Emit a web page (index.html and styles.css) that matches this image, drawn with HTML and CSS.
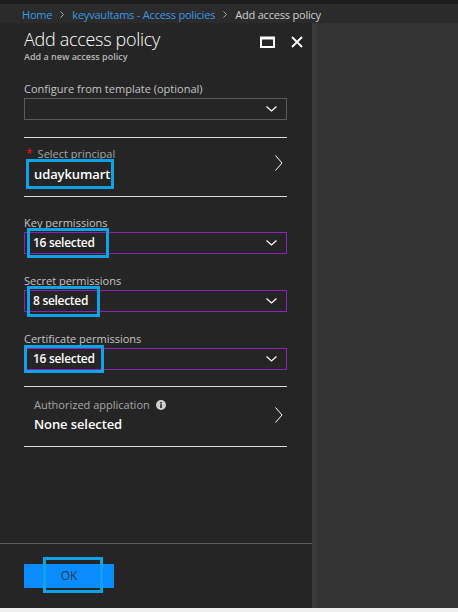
FILE: index.html
```html
<!DOCTYPE html>
<html lang="en">
<head>
<meta charset="utf-8">
<title>Add access policy</title>
<link rel="stylesheet" href="styles.css">
</head>
<body>
<div class="topstrip"></div>
<nav class="breadcrumb">
  <a class="crumb-link">Home</a>
  <svg class="crumb-sep" width="4" height="7" viewBox="0 0 4 7"><polyline points="0.5,0.5 3.5,3.5 0.5,6.5" fill="none" stroke="#a8a8a8" stroke-width="1"/></svg>
  <a class="crumb-link">keyvaultams - Access policies</a>
  <svg class="crumb-sep" width="4" height="7" viewBox="0 0 4 7"><polyline points="0.5,0.5 3.5,3.5 0.5,6.5" fill="none" stroke="#a8a8a8" stroke-width="1"/></svg>
  <span class="crumb-current">Add access policy</span>
</nav>
<div class="main">
  <section class="panel">
    <header class="panel-header">
      <div class="titles">
        <h1 class="title">Add access policy</h1>
        <p class="subtitle">Add a new access policy</p>
      </div>
      <div class="window-btns">
        <svg class="icon-max" width="15" height="12" viewBox="0 0 15 12"><rect x="1" y="1.5" width="13" height="9.5" fill="none" stroke="#fff" stroke-width="2"/><rect x="1" y="1" width="13" height="2.5" fill="#fff"/></svg>
        <svg class="icon-close" width="12" height="12" viewBox="0 0 12 12"><path d="M1 1L11 11M11 1L1 11" stroke="#fff" stroke-width="1.8" fill="none"/></svg>
      </div>
    </header>
    <div class="panel-body">
      <div class="field">
        <div class="label">Configure from template (optional)</div>
        <div class="select select-gray">
          <span class="select-value"></span>
          <svg class="chev-down" width="11" height="6" viewBox="0 0 11 6"><polyline points="0.5,0.5 5.5,5 10.5,0.5" fill="none" stroke="#fff" stroke-width="1.2"/></svg>
        </div>
      </div>
      <div class="rule rule-first"></div>
      <div class="nav-field nav-principal">
        <div class="nav-text">
          <div class="label label-dim"><span class="req">*</span>Select principal</div>
          <div class="nav-value">udaykumart<span class="mark mark-principal"></span></div>
        </div>
        <svg class="chev-right" width="8" height="16" viewBox="0 0 8 16"><polyline points="0.5,0.5 7,8 0.5,15.5" fill="none" stroke="#fff" stroke-width="1"/></svg>
      </div>
      <div class="rule"></div>
      <div class="field field-perm">
        <div class="label">Key permissions</div>
        <div class="select select-purple">
          <span class="select-value">16 selected</span>
          <svg class="chev-down" width="11" height="6" viewBox="0 0 11 6"><polyline points="0.5,0.5 5.5,5 10.5,0.5" fill="none" stroke="#fff" stroke-width="1.2"/></svg>
          <span class="mark mark-key"></span>
        </div>
      </div>
      <div class="field field-perm">
        <div class="label">Secret permissions</div>
        <div class="select select-purple">
          <span class="select-value">8 selected</span>
          <svg class="chev-down" width="11" height="6" viewBox="0 0 11 6"><polyline points="0.5,0.5 5.5,5 10.5,0.5" fill="none" stroke="#fff" stroke-width="1.2"/></svg>
          <span class="mark mark-secret"></span>
        </div>
      </div>
      <div class="field field-perm">
        <div class="label">Certificate permissions</div>
        <div class="select select-purple">
          <span class="select-value">16 selected</span>
          <svg class="chev-down" width="11" height="6" viewBox="0 0 11 6"><polyline points="0.5,0.5 5.5,5 10.5,0.5" fill="none" stroke="#fff" stroke-width="1.2"/></svg>
          <span class="mark mark-cert"></span>
        </div>
      </div>
      <div class="rule"></div>
      <div class="nav-field nav-app">
        <div class="nav-text">
          <div class="label label-dim">Authorized application
            <svg class="info" width="10" height="10" viewBox="0 0 10 10"><circle cx="5" cy="5" r="5" fill="#cfcfcf"/><rect x="4.2" y="4.2" width="1.6" height="3.8" fill="#252525"/><rect x="4.2" y="2" width="1.6" height="1.5" fill="#252525"/></svg>
          </div>
          <div class="nav-value">None selected</div>
        </div>
        <svg class="chev-right" width="8" height="16" viewBox="0 0 8 16"><polyline points="0.5,0.5 7,8 0.5,15.5" fill="none" stroke="#fff" stroke-width="1"/></svg>
      </div>
      <div class="rule"></div>
    </div>
    <footer class="panel-footer">
      <button class="ok-btn">OK<span class="mark mark-ok"></span></button>
    </footer>
  </section>
  <div class="scrollbar"></div>
  <div class="backdrop"></div>
</div>
<div class="bottomstrip"></div>
</body>
</html>
```
FILE: styles.css
```css
* { box-sizing: border-box; }
html, body { margin: 0; padding: 0; }
body {
  width: 458px;
  height: 612px;
  overflow: hidden;
  background: #333333;
  font-family: "Open Sans", "Noto Sans", sans-serif;
  color: #fff;
}
.topstrip { height: 4px; background: #1d1d1d; }
.breadcrumb {
  height: 19px;
  background: #2b2b2b;
  display: flex;
  align-items: center;
  padding: 1px 0 0 22px;
  font-size: 11px;
  letter-spacing: -0.2px;
  white-space: nowrap;
  overflow: hidden;
}
.crumb-link { color: #3c9ae4; }
.crumb-current { color: #cfcfcf; }
.crumb-sep { margin: 0 8px; flex: none; }

.main { display: flex; height: 585px; }
.panel {
  width: 312px;
  flex: none;
  background: #252525;
  display: flex;
  flex-direction: column;
}
.scrollbar { width: 5px; flex: none; background: #3a3a3a; }
.backdrop { flex: 1; background: #333333; }
.bottomstrip { height: 4px; background: #f0f0f0; }

.panel-header {
  display: flex;
  justify-content: space-between;
  padding: 4px 9px 0 24px;
}
.title {
  margin: 0;
  font-size: 18px;
  font-weight: 300;
  letter-spacing: -0.3px;
  line-height: 24px;
  color: #fff;
}
.subtitle {
  margin: 0;
  font-size: 9px;
  font-weight: 600;
  line-height: 11px;
  color: #b8b8b8;
}
.window-btns {
  display: flex;
  gap: 16px;
  padding-top: 9px;
  align-items: flex-start;
}

.panel-body {
  flex: 1;
  padding: 19px 25px 0 24px;
}
.label {
  font-size: 11px;
  line-height: 16px;
  color: #c4c4c4;
  white-space: nowrap;
}
.label-dim { color: #a6a6a6; }
.req { color: #e81123; margin-left: 1px; margin-right: 5px; font-size: 12px; }
.select {
  position: relative;
  margin-top: 1px;
  height: 22px;
  display: flex;
  align-items: center;
  justify-content: space-between;
  padding: 0 9px 0 8px;
}
.select-gray { border: 1px solid #5a5a5a; }
.select-purple { border: 1px solid #8a23b8; }
.select-value {
  font-size: 12px;
  font-weight: 600;
  letter-spacing: -0.3px;
  line-height: 20px;
  color: #fff;
}
.chev-down { flex: none; }
.rule { height: 1px; background: #dcdcdc; margin-top: 16px; }
.rule-first { margin-top: 17px; }

.field-perm { margin-top: 19px; }
.rule + .field-perm { margin-top: 18px; }

.nav-field {
  display: flex;
  justify-content: space-between;
  align-items: center;
  padding-left: 1px;
}
.nav-principal { padding-top: 8px; padding-bottom: 12px; }
.nav-principal + .rule { margin-top: 0; }
.nav-app { padding: 10px 0 0 10px; height: 59px; align-items: flex-start; }
.nav-app + .rule { margin-top: 0; }
.nav-principal .nav-value { padding-left: 9px; margin-top: 2px; }
.nav-value {
  position: relative;
  font-size: 13px;
  font-weight: 600;
  line-height: 20px;
  letter-spacing: -0.1px;
  color: #fff;
  margin-top: 1px;
  width: max-content;
}
.chev-right { flex: none; margin-right: 4px; }
.nav-principal .chev-right { margin-top: -5px; }
.nav-app .chev-right { margin-top: 10px; }
.info { vertical-align: -1px; margin-left: 3px; }

.mark {
  position: absolute;
  border: 3px solid #0ea2e9;
  pointer-events: none;
}
.mark-principal { left: 1px; top: -5px; width: 88px; height: 30px; }
.mark-key { left: 2px; top: -5px; width: 82px; height: 30px; }
.mark-secret { left: 2px; top: -5px; width: 73px; height: 31px; }
.mark-cert { left: -1px; top: -4px; width: 80px; height: 28px; }
.mark-ok { left: 19px; top: -7px; width: 60px; height: 36px; }

.panel-footer {
  border-top: 1px solid #5e5e5e;
  padding: 20px 24px 20px;
}
.ok-btn {
  position: relative;
  display: block;
  width: 90px;
  height: 24px;
  border: 0;
  padding: 0;
  background: #0a8cff;
  color: #2e3a46;
  font-family: "Open Sans", "Noto Sans", sans-serif;
  font-size: 12px;
  line-height: 24px;
}
```
